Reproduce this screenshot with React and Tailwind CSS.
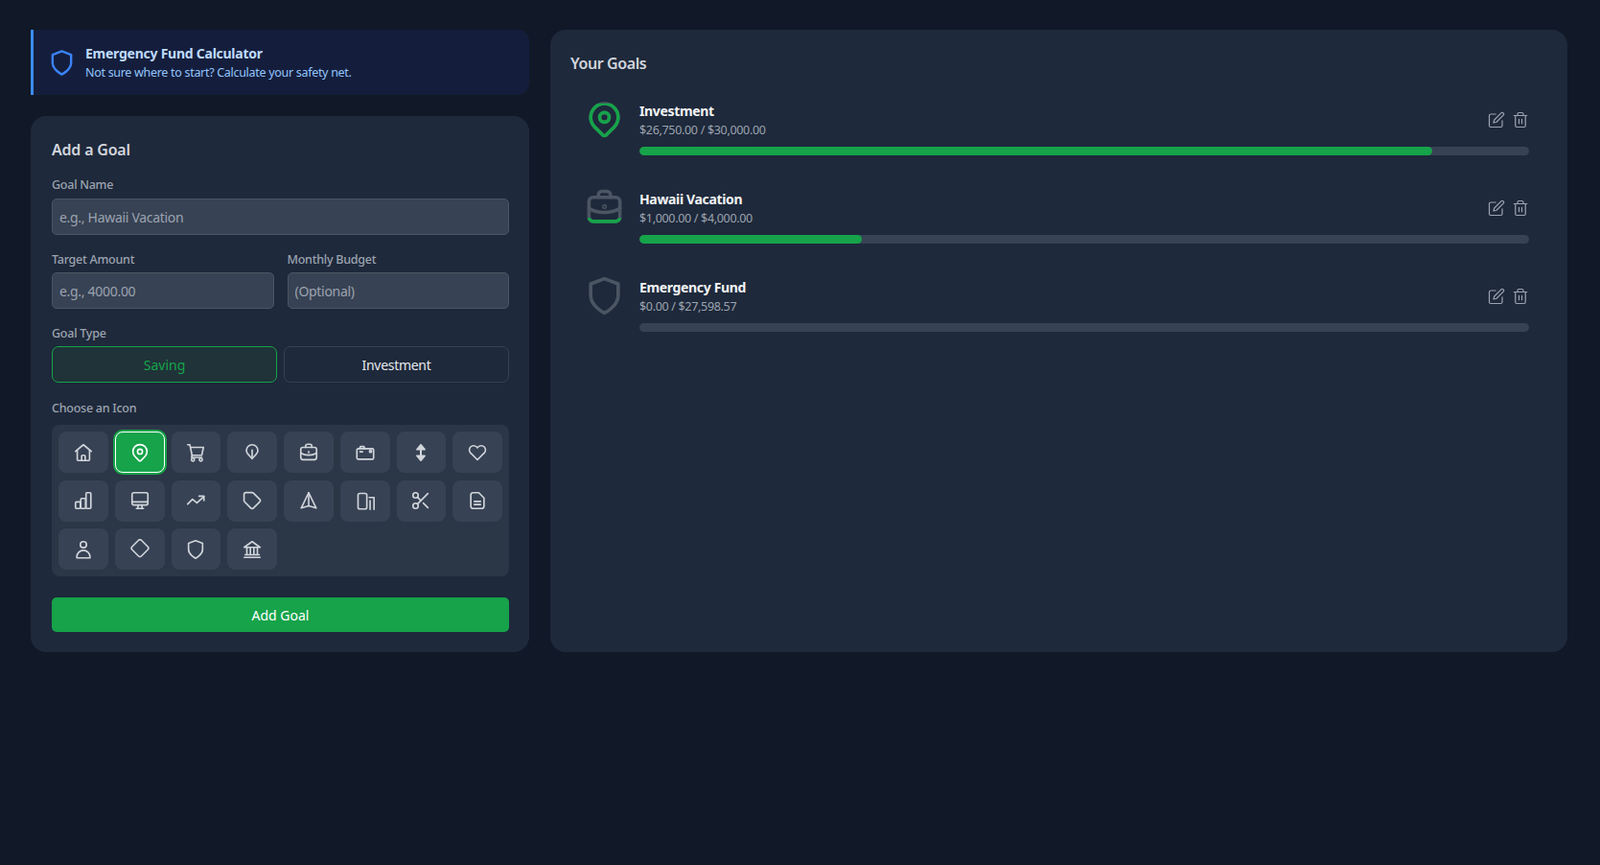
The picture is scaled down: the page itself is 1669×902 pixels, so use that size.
const Svg = ({ size = 22, sw = 1.8, className = "", children }) => (
    <svg
        width={size}
        height={size}
        viewBox="0 0 24 24"
        fill="none"
        stroke="currentColor"
        strokeWidth={sw}
        strokeLinecap="round"
        strokeLinejoin="round"
        className={className}
    >
        {children}
    </svg>
);

const PIN = (
    <>
        <path d="M12 21.5c-.4 0-.7-.15-1-.4L6.3 16.4A8 8 0 1 1 17.7 16.4l-4.7 4.7c-.3.25-.6.4-1 .4Z" />
        <circle cx="12" cy="10.8" r="2.8" />
    </>
);
const BRIEFCASE = (
    <>
        <rect x="3" y="6" width="18" height="14" rx="2.5" />
        <path d="M8.5 6V4.5a2 2 0 0 1 2-2h3a2 2 0 0 1 2 2V6" />
        <path d="M3 12.5c2.8 1.6 5.8 2.3 9 2.3s6.2-.7 9-2.3" />
        <circle cx="12" cy="11.5" r=".4" />
    </>
);
const SHIELD = <path d="M12 22s8-4 8-10V5l-8-3-8 3v7c0 6 8 10 8 10z" />;

const ICONS = [
    <>
        <path d="M3 10.5 12 3l9 7.5" />
        <path d="M5 9v11a1 1 0 0 0 1 1h12a1 1 0 0 0 1-1V9" />
        <path d="M10 21v-5a1 1 0 0 1 1-1h2a1 1 0 0 1 1 1v5" />
    </>,
    PIN,
    <>
        <path d="M3 3h2.5L8 15h11l2-9H6" />
        <path d="M8 15l-.5 2.5H19" />
        <circle cx="9" cy="20" r="1.7" />
        <circle cx="18" cy="20" r="1.7" />
    </>,
    <>
        <path d="M12 19c-2-3-6.5-5.5-6.5-9.5a6.5 6.5 0 0 1 13 0C18.5 13.5 14 16 12 19Z" />
        <path d="M12 9v8" />
    </>,
    BRIEFCASE,
    <>
        <rect x="2.5" y="7.5" width="19" height="12" rx="1.5" />
        <path d="M6 7.5V6a1 1 0 0 1 1-1h3a1 1 0 0 1 1 1v1.5" />
        <path d="M6 11h3" />
        <circle cx="18" cy="10.5" r="1.2" />
    </>,
    <>
        <path d="M12 3 7.5 8.5h9Z" fill="currentColor" />
        <path d="M12 21 7.5 15.5h9Z" fill="currentColor" />
        <path d="M12 8v8" strokeWidth="2.2" />
    </>,
    <path
        d="M20.84 4.61a5.5 5.5 0 0 0-7.78 0L12 5.67l-1.06-1.06a5.5 5.5 0 0 0-7.78 7.78l1.06 1.06L12 21.23l7.78-7.78 1.06-1.06a5.5 5.5 0 0 0 0-7.78z"
        transform="translate(12 12) scale(.88) translate(-12 -12)"
        strokeWidth="2"
    />,
    <>
        <rect x="3" y="13.5" width="5.5" height="7.5" rx="1" />
        <rect x="9" y="9.5" width="5.5" height="11.5" rx="1" />
        <rect x="15" y="3" width="5.5" height="18" rx="1" />
    </>,
    <>
        <rect x="3" y="3" width="18" height="14" rx="2" />
        <path d="M3 13.5h18" />
        <path d="M10 17l-.5 3.5M14 17l.5 3.5M8 21h8" />
    </>,
    <>
        <path d="M21.5 7.5l-8 7-5-4L3 16" />
        <path d="M16 7h5.5v5" />
    </>,
    <path d="M20.59 13.41l-7.17 7.17a2 2 0 0 1-2.83 0L3.4 13.4A2 2 0 0 1 2.8 12V4.8a2 2 0 0 1 2-2H12a2 2 0 0 1 1.4.6l7.19 7.19a2 2 0 0 1 0 2.82z" />,
    <>
        <path d="M12 3 3.5 20.5 12 18l8.5 2.5Z" />
        <path d="M12 3v15" />
    </>,
    <>
        <rect x="3.8" y="3.8" width="10" height="17.7" rx="2" />
        <path d="M16.5 8.5h5.5M22 8.5v13.5M17.5 12v10" />
    </>,
    <>
        <circle cx="6" cy="6" r="3" />
        <circle cx="6" cy="18" r="3" />
        <path d="M8.12 8.12 12 12" />
        <path d="M20 4 8.12 15.88" />
        <path d="M14.8 14.8 20 20" />
    </>,
    <>
        <path d="M13.5 3H7a2.5 2.5 0 0 0-2.5 2.5v13A2.5 2.5 0 0 0 7 21h10a2.5 2.5 0 0 0 2.5-2.5V9Z" />
        <path d="M8.5 13h7M8.5 16.5h7" />
    </>,
    <>
        <circle cx="12" cy="6.5" r="3.5" />
        <path d="M4.5 21.5v-1a7.5 7.5 0 0 1 15 0v1Z" />
    </>,
    <rect x="4.5" y="3" width="15" height="15" rx="2.5" transform="rotate(45 12 10.5)" />,
    SHIELD,
    <>
        <path d="M12 3l9 6.5H3Z" />
        <path d="M3 21h18M4 18h16" />
        <path d="M6 10v8M10 10v8M14 10v8M18 10v8" />
    </>,
];

const GOALS = [
    { name: "Investment", amount: "$26,750.00 / $30,000.00", pct: 89.17, icon: PIN },
    { name: "Hawaii Vacation", amount: "$1,000.00 / $4,000.00", pct: 25, icon: BRIEFCASE },
    { name: "Emergency Fund", amount: "$0.00 / $27,598.57", pct: 0, icon: SHIELD },
];

function Field({ label, placeholder, tight }) {
    return (
        <div className="flex-1 min-w-0">
            <label
                className={`block text-[12.5px] tracking-[-0.25px] leading-[18px] font-medium text-[#9ca3af] ${
                    tight ? "mb-[4px]" : "mb-[5px]"
                }`}
            >
                {label}
            </label>
            <input
                placeholder={placeholder}
                className="w-full h-[38px] px-[7px] rounded-[5px] bg-[#374254] border border-[#4b5563] text-[14px] tracking-[-0.3px] placeholder:text-[#9ca3af] outline-none"
            />
        </div>
    );
}

function GoalRow({ goal }) {
    return (
        <div className="flex gap-[15px]">
            <div className="relative w-[43px] h-[43px] shrink-0">
                <Svg size={43} sw={2} className="text-[#4b5563]">
                    {goal.icon}
                </Svg>
                <div
                    className="absolute inset-0 text-[#16a34a]"
                    style={{ clipPath: `inset(${100 - goal.pct}% 0 0 0)` }}
                >
                    <Svg size={43} sw={2}>
                        {goal.icon}
                    </Svg>
                </div>
            </div>
            <div className="flex-1 pt-[3px]">
                <div className="flex items-center justify-between mb-[8px]">
                    <div>
                        <p className="text-[14px] tracking-[-0.35px] leading-[20px] font-bold text-[#f3f4f6]">
                            {goal.name}
                        </p>
                        <p className="text-[12.5px] tracking-[-0.32px] leading-[19px] text-[#9ca3af]">{goal.amount}</p>
                    </div>
                    <div className="flex gap-[7px] -mt-[2px] text-[#9ca3af]">
                        <Svg size={18} sw={1.6}>
                            <path d="M11 4H4a2 2 0 0 0-2 2v14a2 2 0 0 0 2 2h14a2 2 0 0 0 2-2v-7" />
                            <path d="M18.5 2.5a2.121 2.121 0 0 1 3 3L12 15l-4 1 1-4 9.5-9.5z" />
                        </Svg>
                        <Svg size={18} sw={1.6}>
                            <path d="M3 6h18" />
                            <path d="M19 6v14a2 2 0 0 1-2 2H7a2 2 0 0 1-2-2V6" />
                            <path d="M8 6V4a2 2 0 0 1 2-2h4a2 2 0 0 1 2 2v2" />
                            <path d="M10 11v6M14 11v6" />
                        </Svg>
                    </div>
                </div>
                <div className="h-[9px] rounded-full bg-[#374254] overflow-hidden">
                    <div className="h-full rounded-full bg-[#16a34a]" style={{ width: `${goal.pct}%` }} />
                </div>
            </div>
        </div>
    );
}

export default function App() {
    return (
        <div className="min-h-[902px] bg-[#111827] pt-[31px] pl-[32px] pr-[34px] font-['Noto_Sans',sans-serif] text-[#f3f4f6]">
            <div className="flex gap-[22px] items-stretch">
                <div className="w-[520px] shrink-0">
                    <div className="h-[68px] flex items-center gap-[10px] pl-[15px] border-l-[3px] border-[#3b8cf6] rounded-r-[12px] bg-[#141e3c]">
                        <Svg size={29} sw={2} className="text-[#3b82f6]">
                            {SHIELD}
                        </Svg>
                        <div>
                            <p className="text-[14px] tracking-[-0.25px] leading-[21px] font-bold text-[#bfdbfe]">
                                Emergency Fund Calculator
                            </p>
                            <p className="text-[12.5px] tracking-[-0.3px] leading-[20px] text-[#93c5fd]">
                                Not sure where to start? Calculate your safety net.
                            </p>
                        </div>
                    </div>

                    <div className="mt-[22px] h-[559px] rounded-[16px] bg-[#1e293b] pt-[23px] pb-[21px] pl-[22px] pr-[21px]">
                        <h2 className="text-[16px] tracking-[-0.2px] leading-[24px] font-semibold text-[#d1d5db] mb-[16px]">
                            Add a Goal
                        </h2>
                        <Field label="Goal Name" placeholder="e.g., Hawaii Vacation" />
                        <div className="flex gap-[14px] mt-[17px]">
                            <Field tight label="Target Amount" placeholder="e.g., 4000.00" />
                            <Field tight label="Monthly Budget" placeholder="(Optional)" />
                        </div>
                        <div className="mt-[17px]">
                            <p className="text-[12.5px] tracking-[-0.25px] leading-[18px] font-medium text-[#9ca3af] mb-[4px]">
                                Goal Type
                            </p>
                            <div className="flex gap-[7px]">
                                <button className="flex-1 h-[38px] rounded-[7px] border border-[#16a34a] bg-[#1f3339] text-[14px] text-[#16a34a]">
                                    Saving
                                </button>
                                <button className="flex-1 h-[38px] rounded-[7px] border border-[#374151] text-[14px] tracking-[-0.3px] text-[#e5e7eb]">
                                    Investment
                                </button>
                            </div>
                        </div>
                        <div className="mt-[18px]">
                            <p className="text-[12.5px] tracking-[-0.25px] leading-[18px] font-medium text-[#9ca3af] mb-[8px]">
                                Choose an Icon
                            </p>
                            <div className="grid grid-cols-8 gap-x-[7px] gap-y-[7.5px] p-[7px] rounded-[8px] bg-[#2b3646]">
                                {ICONS.map((icon, i) => (
                                    <button
                                        key={i}
                                        className={
                                            i === 1
                                                ? "h-[43px] flex items-center justify-center rounded-[8px] bg-[#16a34a] border border-white ring-2 ring-[#16a34a] text-white"
                                                : "h-[43px] flex items-center justify-center rounded-[8px] bg-[#374254] text-[#d1d5db]"
                                        }
                                    >
                                        <Svg>{icon}</Svg>
                                    </button>
                                ))}
                            </div>
                        </div>
                        <button className="mt-[22px] w-full h-[36px] rounded-[5px] bg-[#16a34a] text-[14px] text-white">
                            Add Goal
                        </button>
                    </div>
                </div>

                <div className="flex-1 rounded-[16px] bg-[#1e293b] pt-[21px] pl-[21px] pr-[21px]">
                    <h2 className="text-[16px] tracking-[-0.4px] leading-[28px] font-semibold text-[#d1d5db] mb-[23px]">
                        Your Goals
                    </h2>
                    <div className="flex flex-col gap-[33px] pl-[14px] pr-[19px]">
                        {GOALS.map((goal) => (
                            <GoalRow key={goal.name} goal={goal} />
                        ))}
                    </div>
                </div>
            </div>
        </div>
    );
}
